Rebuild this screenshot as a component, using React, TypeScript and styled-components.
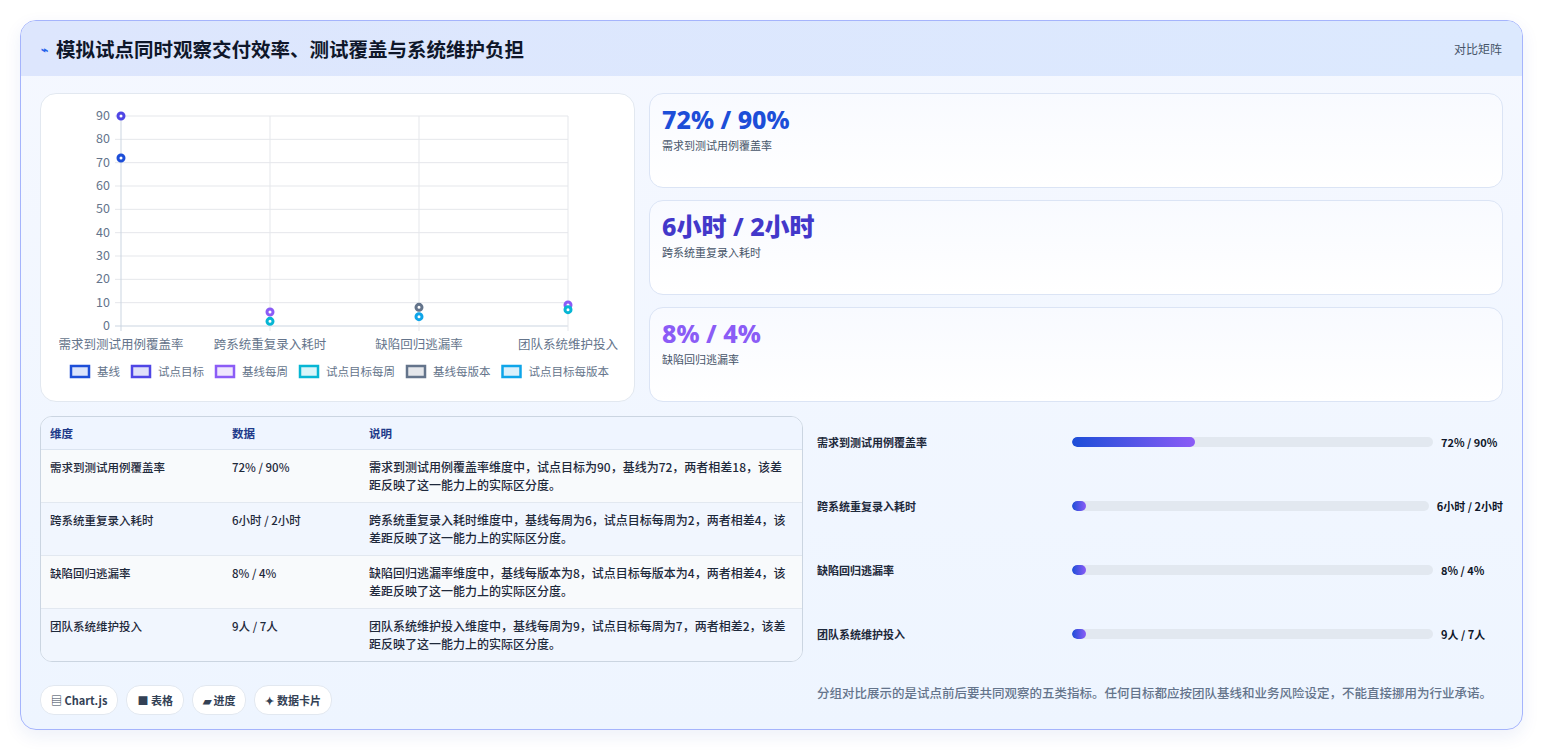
import React from "react";
import styled, { createGlobalStyle } from "styled-components";

const Global = createGlobalStyle`
  html, body { margin: 0; padding: 0; background: #ffffff; }
  body { font-family: "Noto Sans CJK SC", "Noto Sans", sans-serif; color: #1e293b; }
`;

const Page = styled.div`padding: 20px 20px 21px 20px;`;
const Panel = styled.section`
  border: 1px solid #a5b4fc; border-radius: 16px; overflow: hidden;
  background: linear-gradient(180deg, #f5f8ff 0%, #eef5ff 100%);
  box-shadow: 0 6px 18px rgba(30, 64, 175, 0.08);
`;
const Header = styled.header`
  height: 55px; display: flex; align-items: center; justify-content: space-between;
  padding: 0 20px 0 20px; background: linear-gradient(90deg, #dde6fd, #dce9fe);
`;
const Title = styled.h1`
  margin: 0; font-size: 19.5px; font-weight: 700; color: #0f172a; display: flex; align-items: center; gap: 8px;
`;
const Tag = styled.span`font-size: 12px; color: #475569;`;
const Body = styled.div`padding: 17px 19px 14px 19px; display: flex; flex-direction: column; gap: 14px;`;
const TopRow = styled.div`display: grid; grid-template-columns: 595px 1fr; gap: 14px; height: 309px;`;
const ChartCard = styled.div`
  background: #fff; border: 1px solid #e2e8f0; border-radius: 16px; padding: 0;
`;
const Stats = styled.div`display: grid; grid-template-rows: repeat(3, 1fr); gap: 12px;`;
const StatCard = styled.div`
  background: linear-gradient(180deg, #f8faff, #ffffff); border: 1px solid #dbe4f5; border-radius: 14px;
  padding: 10px 12px;
`;
const StatValue = styled.div<{ $c: string }>`
  font-family: "Noto Sans", "Noto Sans CJK SC", sans-serif; font-weight: 800; font-size: 25px; line-height: 30px; color: ${p => p.$c};
`;
const StatLabel = styled.div`font-size: 11px; color: #475569; margin-top: 3px;`;
const BottomRow = styled.div`display: grid; grid-template-columns: 763px 1fr; gap: 14px;`;
const Left = styled.div`display: flex; flex-direction: column; gap: 23px;`;
const Table = styled.table`
  width: 100%; border-collapse: separate; border-spacing: 0; border: 1px solid #cbd5e1; border-radius: 12px; overflow: hidden;
  font-size: 11.5px; background: #f8fafc;
  th { text-align: left; font-weight: 700; color: #1e3a8a; height: 32px; padding: 0 9px; background: #eff5ff; border-bottom: 1px solid #dbe4f0; }
  td { vertical-align: top; padding: 8px 9px 8px; line-height: 18px; color: #1e293b; font-weight: 500; border-bottom: 1px solid #e2e8f0; }
  td:last-child { font-size: 12px; }
  tr:nth-child(even) td { background: #f1f6fe; }
  tr:last-child td { border-bottom: none; }
`;
const Pills = styled.div`display: flex; gap: 8px;`;
const Pill = styled.span`
  background: #fff; border: 1px solid #e2e8f0; border-radius: 14px; padding: 0 10px; height: 28px; line-height: 28px;
  font-size: 11px; font-weight: 600; color: #334155;
`;
const Right = styled.div`display: flex; flex-direction: column;`;
const BarRow = styled.div`display: flex; align-items: center; height: 64px; font-size: 11px; font-weight: 600;`;
const FirstRows = styled.div`margin-top: -6px;`;
const BarLabel = styled.div`width: 255px; color: #1e293b;`;
const Track = styled.div`flex: 1; height: 10px; border-radius: 5px; background: #e2e8f0; overflow: hidden;`;
const Fill = styled.div`height: 100%; border-radius: 5px; background: linear-gradient(90deg, #1d4ed8, #8b5cf6); min-width: 14px;`;
const BarVal = styled.div`margin-left: 8px; color: #0f172a; font-weight: 700; white-space: nowrap; min-width: 62px;`;
const Note = styled.p`margin: 16px 0 0 0; font-size: 12.5px; line-height: 21px; color: #64748b; font-weight: 500;`;

const cats = ["需求到测试用例覆盖率", "跨系统重复录入耗时", "缺陷回归逃漏率", "团队系统维护投入"];
const legend: [string, string, string][] = [
  ["基线", "#1d4ed8", "#dbe4fb"], ["试点目标", "#4f46e5", "#e0e0f9"], ["基线每周", "#8b5cf6", "#efe7fd"],
  ["试点目标每周", "#06b6d4", "#d9f5f9"], ["基线每版本", "#64748b", "#e5e7eb"], ["试点目标每版本", "#0ea5e9", "#dbf0fb"],
];
const pts: [number, number, string][] = [
  [0, 90, "#4f46e5"], [0, 72, "#1d4ed8"], [1, 6, "#8b5cf6"], [1, 2, "#06b6d4"],
  [2, 8, "#64748b"], [2, 4, "#0ea5e9"], [3, 9, "#8b5cf6"], [3, 7, "#06b6d4"],
];

function Chart() {
  const x0 = 80, x1 = 527, yTop = 22, yBot = 232;
  const xs = [0, 1, 2, 3].map(i => x0 + (i * (x1 - x0)) / 3);
  const y = (v: number) => yBot - (v / 90) * (yBot - yTop);
  return (
    <svg width="593" height="300" style={{ display: "block" }} fontFamily="'Noto Sans CJK SC', sans-serif">
      {[0, 10, 20, 30, 40, 50, 60, 70, 80, 90].map(v => (
        <g key={v}>
          <line x1={x0 - 6} x2={x1} y1={y(v)} y2={y(v)} stroke={v === 0 ? "#cbd5e1" : "#e5e7eb"} />
          <text x={x0 - 11} y={y(v) + 4} textAnchor="end" fontSize="12.5" fill="#64748b">{v}</text>
        </g>
      ))}
      {xs.map((x, i) => (
        <g key={i}>
          <line x1={x} x2={x} y1={yTop} y2={yBot + 5} stroke={i === 0 ? "#cbd5e1" : "#e5e7eb"} />
          <text x={x} y={yBot + 23} textAnchor="middle" fontSize="12.5" fill="#64748b">{cats[i]}</text>
        </g>
      ))}
      {pts.map(([c, v, col], i) => (
        <circle key={i} cx={xs[c]} cy={y(v)} r="3" fill="#fff" stroke={col} strokeWidth="3" />
      ))}
      {(() => {
        let x = 30;
        return legend.map(([t, s, f]) => {
          const w = t.length * 11.5;
          const g = (
            <g key={t}>
              <rect x={x} y={272} width="18" height="11" fill={f} stroke={s} strokeWidth="2.5" />
              <text x={x + 26} y={282} fontSize="11.5" fill="#64748b">{t}</text>
            </g>
          );
          x += 26 + w + 12;
          return g;
        });
      })()}
    </svg>
  );
}

const rows = [
  ["需求到测试用例覆盖率", "72% / 90%", "需求到测试用例覆盖率维度中，试点目标为90，基线为72，两者相差18，该差距反映了这一能力上的实际区分度。"],
  ["跨系统重复录入耗时", "6小时 / 2小时", "跨系统重复录入耗时维度中，基线每周为6，试点目标每周为2，两者相差4，该差距反映了这一能力上的实际区分度。"],
  ["缺陷回归逃漏率", "8% / 4%", "缺陷回归逃漏率维度中，基线每版本为8，试点目标每版本为4，两者相差4，该差距反映了这一能力上的实际区分度。"],
  ["团队系统维护投入", "9人 / 7人", "团队系统维护投入维度中，基线每周为9，试点目标每周为7，两者相差2，该差距反映了这一能力上的实际区分度。"],
];
const bars = [["需求到测试用例覆盖率", 34, "72% / 90%"], ["跨系统重复录入耗时", 0, "6小时 / 2小时"], ["缺陷回归逃漏率", 0, "8% / 4%"], ["团队系统维护投入", 0, "9人 / 7人"]] as const;

export default function App() {
  return (
    <Page>
      <Global />
      <Panel>
        <Header>
          <Title><span style={{ color: "#2563eb", fontSize: 12 }}>⌁</span>模拟试点同时观察交付效率、测试覆盖与系统维护负担</Title>
          <Tag>对比矩阵</Tag>
        </Header>
        <Body>
          <TopRow>
            <ChartCard><Chart /></ChartCard>
            <Stats>
              <StatCard><StatValue $c="#1d4ed8">72% / 90%</StatValue><StatLabel>需求到测试用例覆盖率</StatLabel></StatCard>
              <StatCard><StatValue $c="#4338ca">6小时 / 2小时</StatValue><StatLabel>跨系统重复录入耗时</StatLabel></StatCard>
              <StatCard><StatValue $c="#8b5cf6">8% / 4%</StatValue><StatLabel>缺陷回归逃漏率</StatLabel></StatCard>
            </Stats>
          </TopRow>
          <BottomRow>
            <Left>
              <Table>
                <colgroup><col style={{ width: 182 }} /><col style={{ width: 137 }} /><col /></colgroup>
                <thead><tr><th>维度</th><th>数据</th><th>说明</th></tr></thead>
                <tbody>{rows.map(r => <tr key={r[0]}><td>{r[0]}</td><td>{r[1]}</td><td>{r[2]}</td></tr>)}</tbody>
              </Table>
              <Pills><Pill>▤ Chart.js</Pill><Pill>■ 表格</Pill><Pill>▰ 进度</Pill><Pill>✦ 数据卡片</Pill></Pills>
            </Left>
            <Right>
              <FirstRows>
                {bars.map(([l, p, v]) => (
                  <BarRow key={l}>
                    <BarLabel>{l}</BarLabel>
                    <Track><Fill style={{ width: `${p}%` }} /></Track>
                    <BarVal>{v}</BarVal>
                  </BarRow>
                ))}
              </FirstRows>
              <Note>分组对比展示的是试点前后要共同观察的五类指标。任何目标都应按团队基线和业务风险设定，不能直接挪用为行业承诺。</Note>
            </Right>
          </BottomRow>
        </Body>
      </Panel>
    </Page>
  );
}
